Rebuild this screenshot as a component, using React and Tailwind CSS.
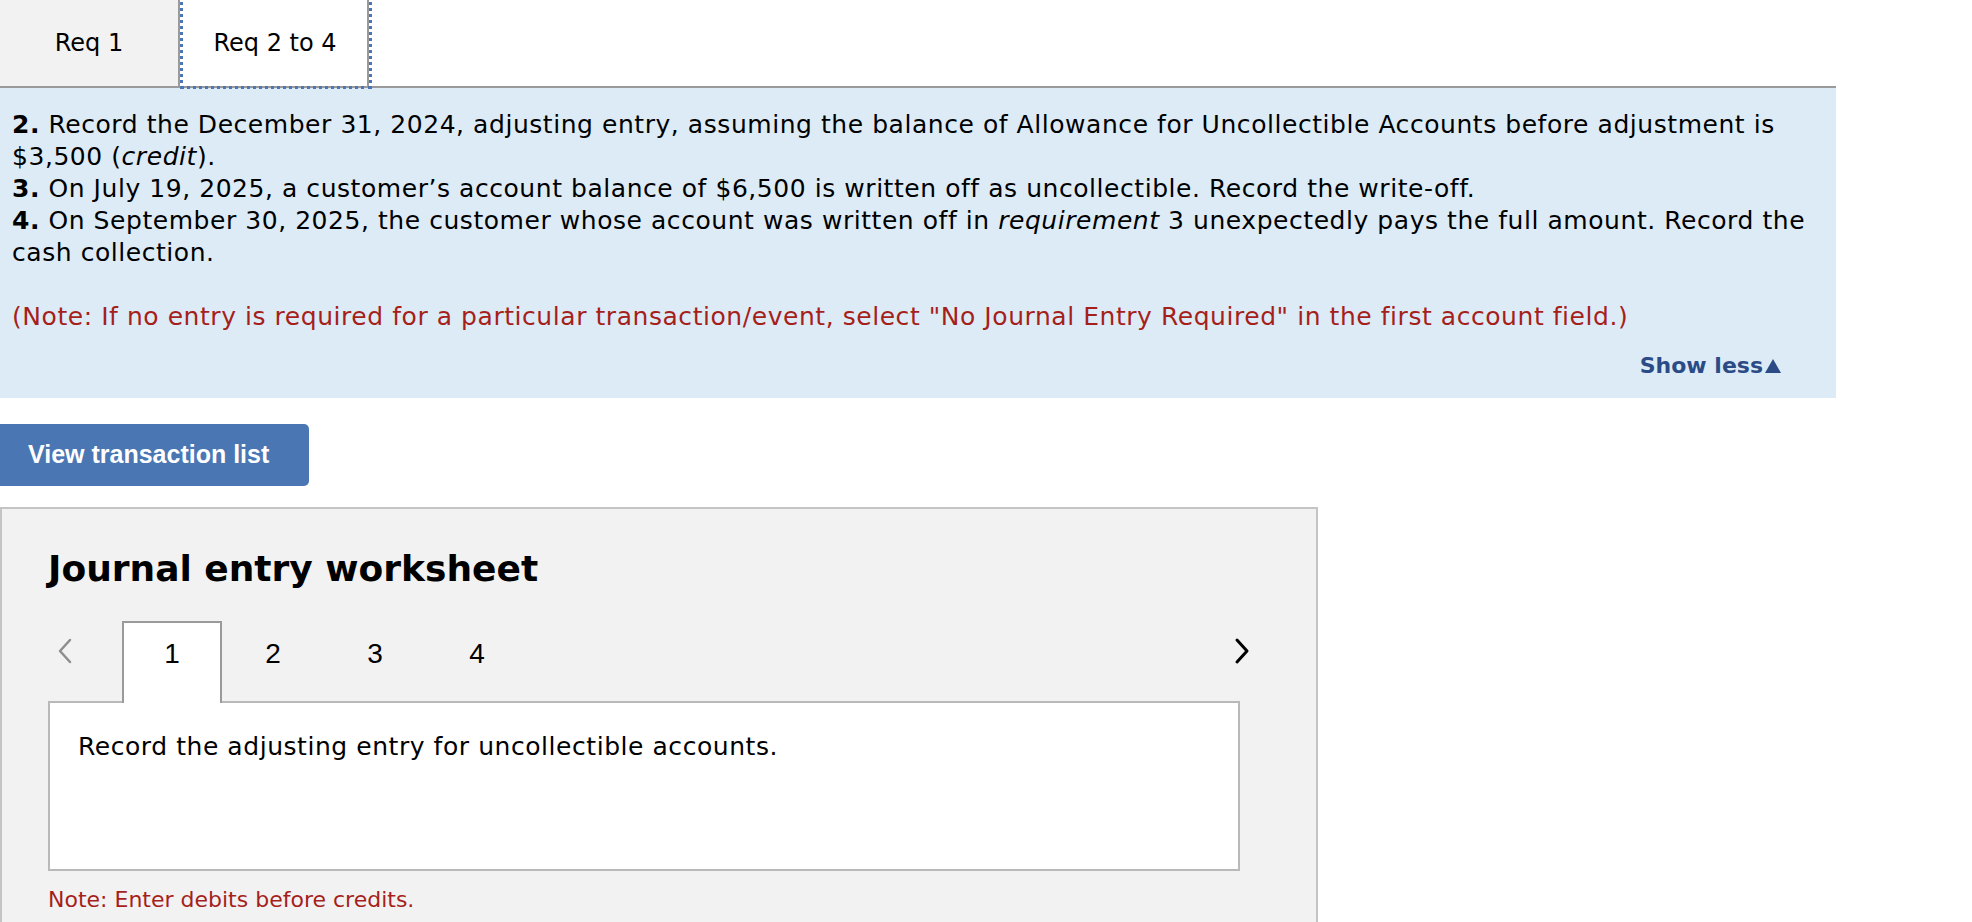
import { useState } from "react"

function ReqTabs() {
  return (
    <div className="flex h-[88px] border-b-2 border-[#9a9a9a]">
      <div className="w-[180px] bg-[#f2f2f2] border-r-2 border-[#9a9a9a] flex items-center justify-center text-[24px] text-black">
        Req 1
      </div>
      <div className="ml-[3px] w-[186px] h-[86px] bg-white border-r-2 border-[#9a9a9a] flex items-center justify-center text-[24px] text-black outline-[3px] outline-dotted outline-[#4b77b9]">
        Req 2 to 4
      </div>
    </div>
  )
}

function Instructions() {
  return (
    <div className="bg-[#ddebf7] pl-[12px] pr-[6px] pt-[21px] pb-[18px] text-[25px] leading-[32px] tracking-[0.55px] text-black">
      <p>
        <b>2.</b> Record the December 31, 2024, adjusting entry, assuming the balance of Allowance for Uncollectible Accounts before adjustment is $3,500 (<i>credit</i>).
        <br />
        <b>3.</b> On July 19, 2025, a customer’s account balance of $6,500 is written off as uncollectible. Record the write-off.
        <br />
        <b>4.</b> On September 30, 2025, the customer whose account was written off in <i>requirement</i> 3 unexpectedly pays the full amount. Record the cash collection.
      </p>
      <p className="mt-[32px] text-[#a51f1b]">
        (Note: If no entry is required for a particular transaction/event, select "No Journal Entry Required" in the first account field.)
      </p>
      <div className="mt-[19px] flex justify-end pr-[48px]">
        <button className="flex items-center text-[22px] leading-[28px] tracking-normal font-bold text-[#2a4b86]">
          Show less
          <svg width="18" height="16" viewBox="0 0 18 16" className="ml-[1px]">
            <path d="M9 1 L17 15 L1 15 Z" fill="#2a4b86" />
          </svg>
        </button>
      </div>
    </div>
  )
}

function Chevron({ dir, color, width }) {
  const d = dir === "left" ? "M15 3 L5 14 L15 25" : "M5 3 L15 14 L5 25"
  return (
    <svg width="20" height="28" viewBox="0 0 20 28">
      <path d={d} fill="none" stroke={color} strokeWidth={width} strokeLinecap="round" strokeLinejoin="round" />
    </svg>
  )
}

function Worksheet() {
  const [active, setActive] = useState(1)
  return (
    <div className="mt-[21px] w-[1318px] h-[460px] bg-[#f2f2f2] border-2 border-[#c4c4c4] pl-[46px] pr-[64px] pt-[38px]">
      <h2 className="text-[36px] leading-[44px] font-bold text-black">Journal entry worksheet</h2>
      <div className="mt-[30px] flex items-start">
        <div className="w-[74px] h-[80px] flex pl-[7px] pt-[16px]">
          <Chevron dir="left" color="#8e8e8e" width={2.5} />
        </div>
        {[1, 2, 3, 4].map((n) => (
          <div
            key={n}
            onClick={() => setActive(n)}
            className={
              n === active
                ? "relative z-10 w-[100px] h-[82px] bg-white border-2 border-b-0 border-[#9a9a9a] pt-[16px] text-center text-[28px] leading-[30px] text-black cursor-pointer font-['Liberation_Sans',sans-serif]"
                : "w-[102px] h-[80px] pt-[18px] text-center text-[28px] leading-[30px] text-black cursor-pointer font-['Liberation_Sans',sans-serif]"
            }
          >
            {n}
          </div>
        ))}
        <div className="flex-1 h-[80px] flex justify-end pt-[16px]">
          <Chevron dir="right" color="#000" width={3} />
        </div>
      </div>
      <div className="-mt-[2px] w-[1192px] h-[170px] bg-white border-2 border-[#b9b9b9] pl-[28px] pt-[28px] text-[25px] leading-[32px] tracking-[0.55px] text-black">
        Record the adjusting entry for uncollectible accounts.
      </div>
      <p className="mt-[14px] text-[22px] leading-[30px] text-[#a51f1b]">Note: Enter debits before credits.</p>
    </div>
  )
}

export default function App() {
  return (
    <div className="w-[1972px] h-[922px] overflow-hidden bg-white font-['DejaVu_Sans',Verdana,sans-serif]">
      <div className="w-[1836px]">
        <ReqTabs />
        <Instructions />
      </div>
      <button className="mt-[26px] h-[62px] w-[309px] rounded-r-[5px] bg-[#4a76b4] pl-[28px] text-left text-[25px] font-bold text-white font-['Liberation_Sans',Arial,sans-serif]">
        View transaction list
      </button>
      <Worksheet />
    </div>
  )
}
